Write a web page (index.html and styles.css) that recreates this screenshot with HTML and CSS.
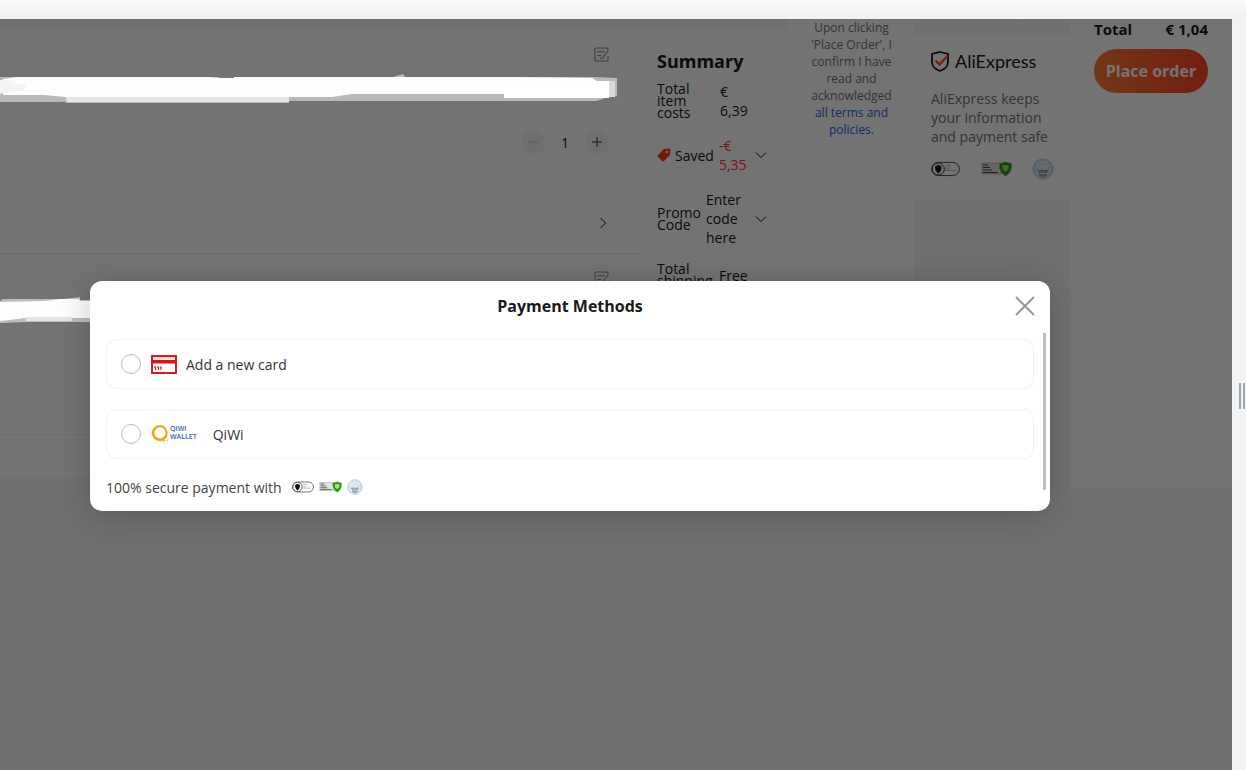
FILE: index.html
```html
<!DOCTYPE html>
<html lang="en">
<head>
<meta charset="utf-8">
<title>Checkout</title>
<link rel="stylesheet" href="styles.css">
</head>
<body>
<svg class="defs" aria-hidden="true">
  <defs>
    <symbol id="note" viewBox="0 0 16 15"><path d="M15 3.500V2a1.500 1.500 0 0 0-1.500-1.500h-11A1.500 1.500 0 0 0 1 2v11a1.500 1.500 0 0 0 1.500 1.500H14a1 1 0 0 0 1-1V9M3.500 4.500h8M3.500 8.500h4M15 3.500L9 11.500H6.500" fill="none" stroke="currentColor" stroke-width="1.100"/></symbol>
    <symbol id="down" viewBox="0 0 12 8"><path d="M1 1.500l5 5 5-5" fill="none" stroke="currentColor" stroke-width="1"/></symbol>
    <symbol id="trust" viewBox="0 0 30 16">
      <rect x=".7" y="1.200" width="28.600" height="13.600" rx="6.800" fill="#fff" stroke="#444" stroke-width="1"/>
      <circle cx="7.500" cy="8" r="6.300" fill="#fff" stroke="#333" stroke-width="1"/>
      <path d="M4 5.500l3.500-2 3.500 2-.7 4L7.500 13 4.700 9.500z" fill="#111"/>
      <path d="M15 4.500h6M15 7h5M15 9.500h11" stroke="#999" stroke-width=".8"/>
    </symbol>
    <symbol id="shield" viewBox="0 0 31 16">
      <path d="M1 2h19v11H1z" fill="#ddd" stroke="#aaa" stroke-width=".7"/>
      <path d="M2 4h5M2 6.500h7M2 9h9M2 11.500h15" stroke="#444" stroke-width="1"/>
      <path d="M24.500 1l6 1.500c.2 6-1 9.500-6 12.500-5-3-6.200-6.500-6-12.500z" fill="#219315" stroke="#86c77b" stroke-width=".8"/>
      <path d="M21.500 4h6v4.500l-3 2.500-3-2.500z" fill="#a3e36d"/>
    </symbol>
    <symbol id="seal" viewBox="0 0 22 22">
      <circle cx="11" cy="11" r="10" fill="#f2f7f9" stroke="#a9c5d2" stroke-width="1"/>
      <circle cx="11" cy="11" r="8.300" fill="none" stroke="#a5c5d5" stroke-width="2" stroke-dasharray="1 1"/>
      <path d="M5.500 12V9l2-2 1-1.500h5L15 7l1.500 2v3z" fill="#dfe9ed" stroke="#b0c5ce" stroke-width=".6"/>
      <path d="M4.500 12h13L15 15v2.500l-4 2-4-2V15z" fill="#8fa9b5"/>
      <path d="M8 15.500h6" stroke="#dde8ee"/>
    </symbol>
  </defs>
</svg>

<div class="topbar"></div>
<div class="workspace">
  <div class="page">
    <main class="columns">
      <section class="items">
        <article class="item">
          <div class="note-row"><button class="bare" aria-label="Edit note"><svg class="note"><use href="#note"/></svg></button></div>
          <div class="quantity">
            <button class="step step-off" aria-label="Decrease"><svg viewBox="0 0 12 12"><path d="M1 6h10"/></svg></button>
            <span class="count">1</span>
            <button class="step" aria-label="Increase"><svg viewBox="0 0 12 12"><path d="M1 6h10M6 1v10"/></svg></button>
          </div>
          <div class="delivery"><button class="bare" aria-label="Delivery options"><svg class="next" viewBox="0 0 8 12"><path d="M1.500 1l5 5-5 5"/></svg></button></div>
        </article>
        <article class="item">
          <div class="note-row"><button class="bare" aria-label="Edit note"><svg class="note"><use href="#note"/></svg></button></div>
          <div class="item-rest"></div>
          <div class="item-end"></div>
        </article>
      </section>

      <section class="summary">
        <h2>Summary</h2>
        <div class="line costs"><span class="label">Total item costs</span><span class="value">€<br>6,39</span></div>
        <div class="line saved">
          <svg class="tag" viewBox="0 0 14 14"><path d="M7 1l5-.5q1.500 0 1.500 1.500L13 7l-6 6q-1 1-2 0L1 9q-1-1 0-2z" fill="#fd3a20"/><circle cx="10" cy="4" r="1.200" fill="#fff"/></svg>
          <span class="saved-label">Saved</span><span class="value red">-€<br>5,35</span>
          <button class="bare toggle" aria-label="Show savings"><svg class="down"><use href="#down"/></svg></button>
        </div>
        <div class="line promo"><span class="label">Promo Code</span><span class="value">Enter code here</span><button class="bare toggle" aria-label="Enter promo code"><svg class="down"><use href="#down"/></svg></button></div>
        <div class="line shipping"><span class="label">Total shipping</span><span class="value">Free</span></div>
      </section>

      <section class="terms"><p>Upon clicking 'Place Order', I confirm I have read and acknowledged <a href="#">all terms and policies.</a></p></section>

      <section class="safety">
        <div class="safety-card">
          <div class="brand">
            <svg class="brand-shield" viewBox="0 0 18 21"><path d="M9 1l8 2v8c0 5-3 7-8 9-5-2-8-4-8-9V3z" fill="none" stroke="#191919" stroke-width="1.800"/><path d="M4.500 9.500l4 4 8-8.500" fill="none" stroke="#fd4b30" stroke-width="2.400"/></svg>
            <span>AliExpress</span>
          </div>
          <p>AliExpress keeps your information and payment safe</p>
          <div class="badges"><svg class="b-trust"><use href="#trust"/></svg><svg class="b-shield"><use href="#shield"/></svg><svg class="b-seal"><use href="#seal"/></svg></div>
        </div>
      </section>

      <section class="order">
        <div class="total"><span>Total</span><span>€ 1,04</span></div>
        <button class="place">Place order</button>
      </section>
    </main>

    <div class="overlay">
      <svg class="strokes" viewBox="0 0 620 310" aria-hidden="true">
        <path d="M0 58h393l10-3 2 3h190l22 1v18l-12 2-8 3H289v2H67l-2-1H0z" fill="#b9b9b9"/>
        <path d="M65 76l224 1v6H67z" fill="#e6e6e6"/>
        <path d="M3 60l14-2h190l12 1h15v-1h280l78 1 5 3h12v16h-85v-3H352l-20 3H65L44 76H3z" fill="#fdfdfd"/>
        <path d="M504 62h105v17H504z" fill="#fff"/>
        <path d="M609 62h6v16h-6z" fill="#d8d8d8"/>
        <path d="M0 61l16 1-2 3 12 1-2 6-17 1-7 2z" fill="#f4f4f4"/>
        <path d="M219 57h15v2h-15z" fill="#777"/>
        <path d="M3 280h60l17-2v3h20v22H26L0 304v-22z" fill="#bdbdbd"/>
        <path d="M0 283l45-1 16-2h18l1 2h20v17H26L0 302z" fill="#fdfdfd"/>
        <path d="M26 298h46v4H26z" fill="#e5e5e5"/>
      </svg>
      <div class="dialog" role="dialog" aria-labelledby="dialog-title">
        <header class="dialog-head">
          <h1 id="dialog-title">Payment Methods</h1>
          <button class="bare close" aria-label="Close"><svg viewBox="0 0 20 20"><path d="M1 1l18 18M19 1L1 19"/></svg></button>
        </header>
        <div class="dialog-body">
          <div class="methods">
            <label class="method"><input type="radio" name="method">
              <svg class="card-icon" viewBox="0 0 26 19"><rect x="1" y="1" width="24" height="17" fill="#fff" stroke="#d51c1c" stroke-width="2"/><path d="M1 5h24v3.500H1z" fill="#e01010"/><path d="M2 3h22" stroke="#ffd0ca" stroke-width="1.600"/><path d="M4.500 12v3M7.500 12v3M10 12v3M3 12h2M6 12h2M9 12h1.500" stroke="#d51c1c" stroke-width="1.200"/></svg>
              <span>Add a new card</span></label>
            <label class="method"><input type="radio" name="method">
              <span class="qiwi"><svg viewBox="0 0 18 18"><path fill-rule="evenodd" d="M8.500 0a8 8 0 1 0 3 15.500l2 1.500c-.3-1-.1-1.500.2-2.500A8.200 8.200 0 0 0 8.500 0zm.8 2.200a5.600 5.600 0 1 1-.5 11.200 5.600 5.600 0 0 1 .5-11.200z" fill="#f6a21b"/><path d="M15 15l2.500-.5-1 2z" fill="#f6b54b"/></svg><span class="qiwi-name">QIWI<br>WALLET</span></span>
              <span>QiWi</span></label>
            <div class="secure"><span>100% secure payment with</span><span class="mini"><svg class="m-trust"><use href="#trust"/></svg><svg class="m-shield"><use href="#shield"/></svg><svg class="m-seal"><use href="#seal"/></svg></span></div>
          </div>
          <div class="scrollbar"></div>
        </div>
      </div>
    </div>
  </div>
  <aside class="gutter"><div class="grip"></div></aside>
</div>
</body>
</html>
```

FILE: styles.css
```css
* { box-sizing: border-box; }
body { margin: 0; height: 100vh; display: flex; flex-direction: column; overflow: hidden; font-family: "Open Sans", "Noto Sans", sans-serif; font-size: 14px; line-height: 19px; color: #191919; background: #f1f3f5; }
h1, h2, p { margin: 0; }
button { font: inherit; color: inherit; }
svg { display: block; flex: none; }
.defs { position: absolute; width: 0; height: 0; }
.bare { border: 0; padding: 0; background: none; }
.topbar { flex: none; height: 19px; background: linear-gradient(#f9f9f9, #f2f2f2); }
.workspace { flex: 1; min-height: 0; display: flex; }
.page { flex: 1; min-width: 0; position: relative; overflow: hidden; background: #f8f8f8; }
.columns { display: grid; grid-template-columns: 641fr 148fr 125fr 156fr 162fr; align-items: start; }
.columns > section { min-width: 0; }

.items { margin-top: 11px; background: #fff; }
.item { border-bottom: 1px solid #e8e8e8; }
.item + .item { border-bottom: 0; }
.note-row { display: flex; justify-content: flex-end; padding: 17px 32px 0 0; }
.note { width: 15px; height: 15px; color: #888; }
.quantity { display: flex; justify-content: flex-end; align-items: center; padding: 68px 32px 0 0; }
.step { width: 24px; height: 24px; border: 0; border-radius: 50%; padding: 6px; background: #f5f5f5; }
.step svg { width: 12px; height: 12px; fill: none; stroke: #333; stroke-width: 1; }
.step-off svg { stroke: #ccc; }
.count { width: 40px; text-align: center; }
.delivery { display: flex; justify-content: flex-end; margin: 56px 32px 0 0; padding: 6px 0 24px; border-top: 1px solid #f8f8f8; }
.next { width: 8px; height: 12px; margin-right: 2px; fill: none; stroke: #191919; stroke-width: 1; }
.item-rest { height: 149px; border-bottom: 1px solid #f2f2f2; }
.item-end { height: 42px; }

.summary { margin-top: 11px; padding: 20px 22px 160px 16px; background: #fff; font-weight: 500; }
.summary h2 { font-size: 18px; line-height: 22px; font-weight: 700; }
.line { display: flex; align-items: center; }
.label { line-height: 12px; }
.costs { margin-top: 10px; }
.costs .label { width: 40px; margin-right: 23px; }
.saved { margin-top: 16px; }
.tag { width: 14px; height: 14px; margin-right: 4px; }
.saved-label { margin-right: 5px; }
.red { color: #fd3838; }
.toggle { margin-left: auto; }
.down { width: 12px; height: 8px; }
.promo { margin-top: 16px; }
.promo .label { width: 45px; margin-right: 4px; }
.promo .value { width: 42px; }
.shipping { margin-top: 16px; }
.shipping .label { width: 57px; margin-right: 5px; }

.terms { padding: 0 20px; background: #fff; min-height: 470px; font-size: 12px; line-height: 17px; text-align: center; color: #757575; }
.terms a { color: #2d63de; text-decoration: none; }

.safety { padding-top: 17px; background: #f8f8f8; }
.safety-card { padding: 14px 16px 20px 17px; background: #fff; color: #757575; }
.brand { display: flex; align-items: center; gap: 6px; font-family: Lato, sans-serif; font-size: 18px; line-height: 22px; color: #191919; }
.brand-shield { width: 18px; height: 21px; }
.safety-card p { margin-top: 17px; }
.badges { display: flex; align-items: center; justify-content: space-between; margin-top: 12px; }
.b-trust { width: 29px; height: 16px; }
.b-shield { width: 31px; height: 16px; }
.b-seal { width: 22px; height: 22px; }

.order { min-height: 470px; padding: 1px 24px 0; background: #fff; }
.total { display: flex; justify-content: space-between; font-size: 15px; font-weight: 700; white-space: nowrap; }
.place { display: block; width: 100%; height: 44px; margin-top: 10px; padding: 0; border: 0; border-radius: 22px; font-size: 16px; font-weight: 700; white-space: nowrap; color: #fff; background: linear-gradient(90deg, #ff7a33, #ff4326); }

.overlay { position: absolute; inset: 0; display: flex; align-items: center; padding: 3px 182px 0 90px; background: rgba(0, 0, 0, 0.55); }
.strokes { position: absolute; left: 0; top: 0; width: 620px; height: 310px; }
.dialog { position: relative; flex: 1; padding-bottom: 15px; border-radius: 12px; background: #fff; box-shadow: 0 4px 32px rgba(0, 0, 0, 0.2); }
.dialog-head { display: grid; grid-template-columns: 1fr auto 1fr; align-items: center; padding: 15px 15px 17px; }
.dialog-head h1 { grid-column: 2; font-size: 16px; line-height: 20px; font-weight: 700; }
.close { justify-self: end; }
.close svg { width: 20px; height: 20px; fill: none; stroke: #999; stroke-width: 2; }
.dialog-body { display: flex; gap: 9px; padding: 0 4px 0 16px; }
.methods { flex: 1; padding-top: 6px; }
.method { display: flex; align-items: center; height: 50px; margin-bottom: 20px; padding: 0 14px; border: 1px solid #f0f0f0; border-radius: 10px; color: #333; }
.method input { appearance: none; width: 20px; height: 20px; margin: 0 10px 0 0; border: 1px solid #bbb; border-radius: 50%; }
.card-icon { width: 26px; height: 19px; margin-right: 9px; }
.qiwi { display: flex; gap: 1px; margin-right: 16px; color: #3565aa; font-size: 7px; line-height: 8px; font-weight: 600; }
.qiwi svg { width: 18px; height: 18px; }
.secure { display: flex; align-items: center; gap: 10px; height: 18px; margin-top: -1px; color: #444; }
.mini { display: flex; align-items: center; gap: 5px; }
.m-trust { width: 22px; height: 12px; }
.m-shield { width: 23px; height: 12px; }
.m-seal { width: 16px; height: 16px; }
.scrollbar { width: 3px; margin-bottom: 6px; background: #bfbfbf; }

.gutter { flex: none; width: 14px; display: flex; align-items: center; justify-content: flex-end; padding: 3px 1px 0 0; background: #f1f3f5; }
.grip { width: 6px; height: 26px; border: solid #a5a8aa; border-width: 0 2px; }
```
